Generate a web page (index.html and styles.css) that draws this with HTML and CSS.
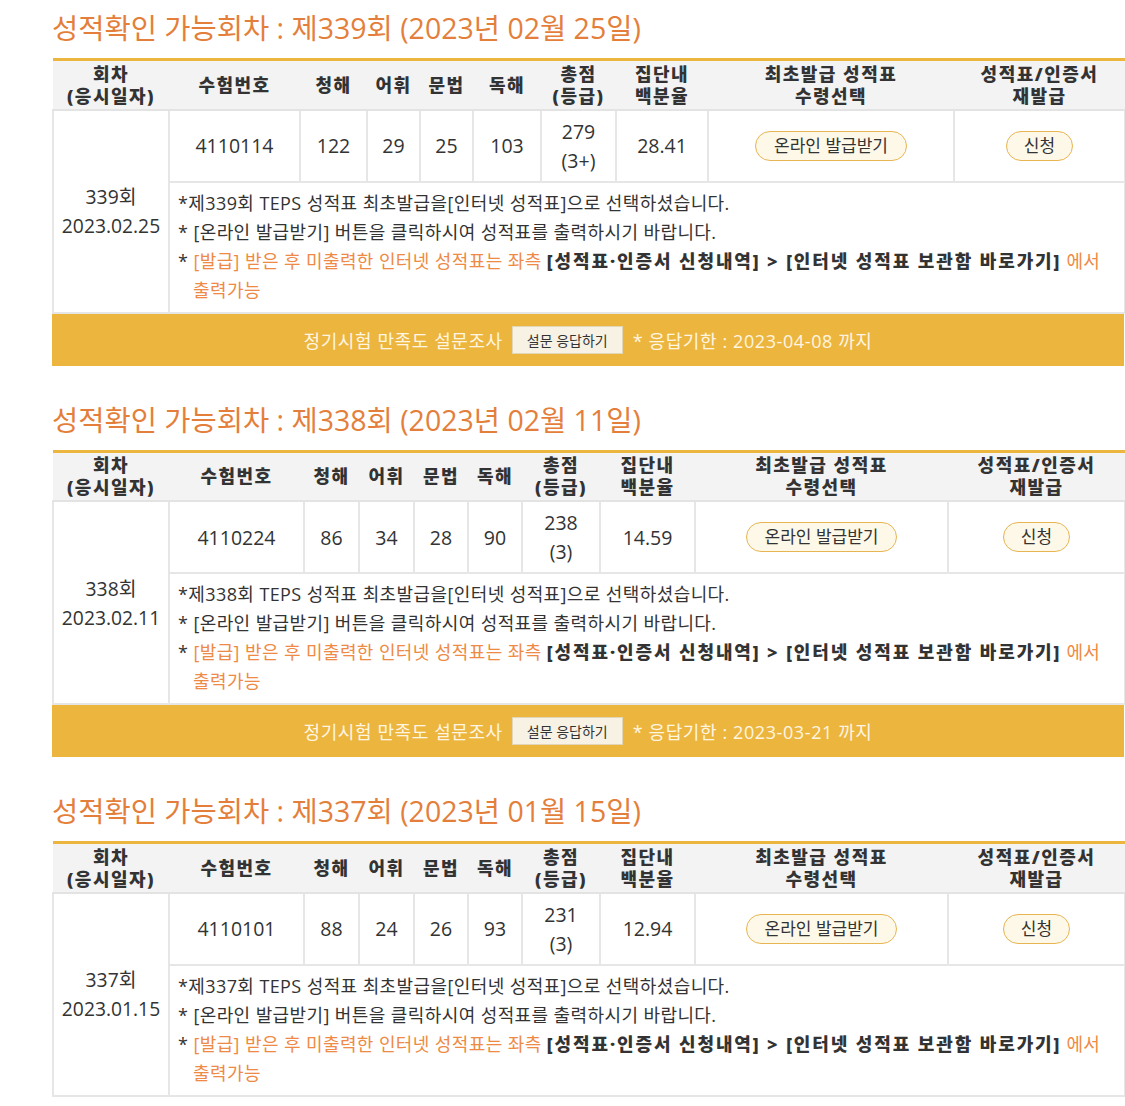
FILE: index.html
```html
<!DOCTYPE html>
<html lang="ko">
<head>
<meta charset="utf-8">
<title>성적확인</title>
<link rel="stylesheet" href="styles.css">
</head>
<body>
<div class="page">

  <section class="round">
    <h2 class="round-title">성적확인 가능회차 : 제339회 (2023년 02월 25일)</h2>
    <table class="score tbl-a">
      <colgroup>
        <col class="c1"><col class="c2"><col class="c3"><col class="c4"><col class="c5">
        <col class="c6"><col class="c7"><col class="c8"><col class="c9"><col class="c10">
      </colgroup>
      <thead>
        <tr>
          <th>회차<br>(응시일자)</th><th>수험번호</th><th>청해</th><th>어휘</th><th>문법</th><th>독해</th>
          <th>총점<br>(등급)</th><th>집단내<br>백분율</th><th>최초발급 성적표<br>수령선택</th><th>성적표/인증서<br>재발급</th>
        </tr>
      </thead>
      <tbody>
        <tr class="data">
          <td rowspan="2" class="round-cell">339회<br>2023.02.25</td>
          <td>4110114</td><td>122</td><td>29</td><td>25</td><td>103</td>
          <td class="two">279<br>(3+)</td><td>28.41</td>
          <td><span class="pill pill-wide">온라인 발급받기</span></td>
          <td><span class="pill">신청</span></td>
        </tr>
        <tr>
          <td colspan="9" class="notes">
            <p class="line">*제339회 TEPS 성적표 최초발급을[인터넷 성적표]으로 선택하셨습니다.</p>
            <p class="line hang">* [온라인 발급받기] 버튼을 클릭하시여 성적표를 출력하시기 바랍니다.</p>
            <p class="line hang">* <span class="warn">[발급] 받은 후 미출력한 인터넷 성적표는 좌측 </span><b class="path">[성적표·인증서 신청내역] &gt; [인터넷 성적표 보관함 바로가기]</b> <span class="warn">에서</span> <span class="warn">출력가능</span></p>
          </td>
        </tr>
      </tbody>
    </table>
    <div class="survey">
      <span class="survey-label">정기시험 만족도 설문조사</span>
      <span class="survey-btn">설문 응답하기</span>
      <span class="survey-due">* 응답기한 : 2023-04-08 까지</span>
    </div>
  </section>

  <section class="round">
    <h2 class="round-title">성적확인 가능회차 : 제338회 (2023년 02월 11일)</h2>
    <table class="score tbl-b">
      <colgroup>
        <col class="c1"><col class="c2"><col class="c3"><col class="c4"><col class="c5">
        <col class="c6"><col class="c7"><col class="c8"><col class="c9"><col class="c10">
      </colgroup>
      <thead>
        <tr>
          <th>회차<br>(응시일자)</th><th>수험번호</th><th>청해</th><th>어휘</th><th>문법</th><th>독해</th>
          <th>총점<br>(등급)</th><th>집단내<br>백분율</th><th>최초발급 성적표<br>수령선택</th><th>성적표/인증서<br>재발급</th>
        </tr>
      </thead>
      <tbody>
        <tr class="data">
          <td rowspan="2" class="round-cell">338회<br>2023.02.11</td>
          <td>4110224</td><td>86</td><td>34</td><td>28</td><td>90</td>
          <td class="two">238<br>(3)</td><td>14.59</td>
          <td><span class="pill pill-wide">온라인 발급받기</span></td>
          <td><span class="pill">신청</span></td>
        </tr>
        <tr>
          <td colspan="9" class="notes">
            <p class="line">*제338회 TEPS 성적표 최초발급을[인터넷 성적표]으로 선택하셨습니다.</p>
            <p class="line hang">* [온라인 발급받기] 버튼을 클릭하시여 성적표를 출력하시기 바랍니다.</p>
            <p class="line hang">* <span class="warn">[발급] 받은 후 미출력한 인터넷 성적표는 좌측 </span><b class="path">[성적표·인증서 신청내역] &gt; [인터넷 성적표 보관함 바로가기]</b> <span class="warn">에서</span> <span class="warn">출력가능</span></p>
          </td>
        </tr>
      </tbody>
    </table>
    <div class="survey">
      <span class="survey-label">정기시험 만족도 설문조사</span>
      <span class="survey-btn">설문 응답하기</span>
      <span class="survey-due">* 응답기한 : 2023-03-21 까지</span>
    </div>
  </section>

  <section class="round">
    <h2 class="round-title">성적확인 가능회차 : 제337회 (2023년 01월 15일)</h2>
    <table class="score tbl-b">
      <colgroup>
        <col class="c1"><col class="c2"><col class="c3"><col class="c4"><col class="c5">
        <col class="c6"><col class="c7"><col class="c8"><col class="c9"><col class="c10">
      </colgroup>
      <thead>
        <tr>
          <th>회차<br>(응시일자)</th><th>수험번호</th><th>청해</th><th>어휘</th><th>문법</th><th>독해</th>
          <th>총점<br>(등급)</th><th>집단내<br>백분율</th><th>최초발급 성적표<br>수령선택</th><th>성적표/인증서<br>재발급</th>
        </tr>
      </thead>
      <tbody>
        <tr class="data">
          <td rowspan="2" class="round-cell">337회<br>2023.01.15</td>
          <td>4110101</td><td>88</td><td>24</td><td>26</td><td>93</td>
          <td class="two">231<br>(3)</td><td>12.94</td>
          <td><span class="pill pill-wide">온라인 발급받기</span></td>
          <td><span class="pill">신청</span></td>
        </tr>
        <tr>
          <td colspan="9" class="notes">
            <p class="line">*제337회 TEPS 성적표 최초발급을[인터넷 성적표]으로 선택하셨습니다.</p>
            <p class="line hang">* [온라인 발급받기] 버튼을 클릭하시여 성적표를 출력하시기 바랍니다.</p>
            <p class="line hang">* <span class="warn">[발급] 받은 후 미출력한 인터넷 성적표는 좌측 </span><b class="path">[성적표·인증서 신청내역] &gt; [인터넷 성적표 보관함 바로가기]</b> <span class="warn">에서</span> <span class="warn">출력가능</span></p>
          </td>
        </tr>
      </tbody>
    </table>
  </section>

</div>
</body>
</html>
```

FILE: styles.css
```css
* { box-sizing: border-box; }

html, body {
  margin: 0;
  padding: 0;
  background: #ffffff;
}

body {
  font-family: "Open Sans", "Noto Sans CJK KR", sans-serif;
  color: #333333;
}

.page {
  padding-left: 52px;
  width: 1124px;
}

.round {
  padding-bottom: 26px;
}

.round-title {
  margin: 8px 0 10px 0;
  height: 40px;
  line-height: 40px;
  font-size: 28.5px;
  font-weight: 400;
  color: #e47f3b;
  white-space: nowrap;
}

.score {
  width: 1072px;
  border-collapse: collapse;
  table-layout: fixed;
  border-top: 3px solid #ecb53e;
}

.tbl-a .c1 { width: 116px; }
.tbl-a .c2 { width: 131px; }
.tbl-a .c3 { width: 67px; }
.tbl-a .c4 { width: 53px; }
.tbl-a .c5 { width: 53px; }
.tbl-a .c6 { width: 68px; }
.tbl-a .c7 { width: 75px; }
.tbl-a .c8 { width: 92px; }
.tbl-a .c9 { width: 246px; }
.tbl-a .c10 { width: 171px; }

.tbl-b .c1 { width: 116px; }
.tbl-b .c2 { width: 135px; }
.tbl-b .c3 { width: 55px; }
.tbl-b .c4 { width: 55px; }
.tbl-b .c5 { width: 54px; }
.tbl-b .c6 { width: 54px; }
.tbl-b .c7 { width: 78px; }
.tbl-b .c8 { width: 95px; }
.tbl-b .c9 { width: 253px; }
.tbl-b .c10 { width: 177px; }

.score th {
  background: #f3f3f4;
  height: 50px;
  padding: 0;
  font-size: 18px;
  font-weight: 800;
  letter-spacing: 1.5px;
  line-height: 22px;
  color: #333333;
  text-align: center;
  vertical-align: middle;
  border-bottom: 2px solid #e3e3e3;
  white-space: nowrap;
}

.score td {
  border: 2px solid #e6e6e6;
  padding: 0;
  text-align: center;
  vertical-align: middle;
  font-size: 19.5px;
  color: #333333;
}

.score tr.data td {
  height: 72px;
}

.score td.two {
  line-height: 29px;
}

.score td.round-cell {
  line-height: 29px;
  font-size: 19.3px;
}

.pill {
  display: inline-block;
  height: 30px;
  line-height: 27px;
  padding: 0 17px;
  border: 1.5px solid #e7b552;
  border-radius: 16px;
  background: #fdf8e8;
  font-size: 17px;
  color: #333333;
}

.pill-wide {
  padding: 0 18px;
}

.score td.notes {
  text-align: left;
  vertical-align: top;
  padding: 6px 8px 7px 8px;
  font-size: 18px;
  letter-spacing: 0.4px;
  line-height: 29px;
  height: 129px;
  word-break: keep-all;
}

.line {
  margin: 0;
}

.line.hang {
  padding-left: 15px;
  text-indent: -15px;
}

.warn {
  color: #ee8a45;
}

.path {
  color: #333333;
  font-weight: 800;
  letter-spacing: 1.9px;
}

.survey {
  width: 1072px;
  height: 52px;
  background: #ecb53e;
  display: flex;
  align-items: center;
  justify-content: center;
  gap: 9px;
  font-size: 18px;
  letter-spacing: 0.6px;
  color: #fff6e2;
}

.survey-btn {
  display: inline-block;
  height: 28px;
  line-height: 27px;
  padding: 0 14px;
  background: #f7f2e4;
  border: 1px solid #e2d6b8;
  font-size: 14px;
  letter-spacing: 0;
  color: #333333;
}

.survey-due {
  padding-left: 1px;
}
```
